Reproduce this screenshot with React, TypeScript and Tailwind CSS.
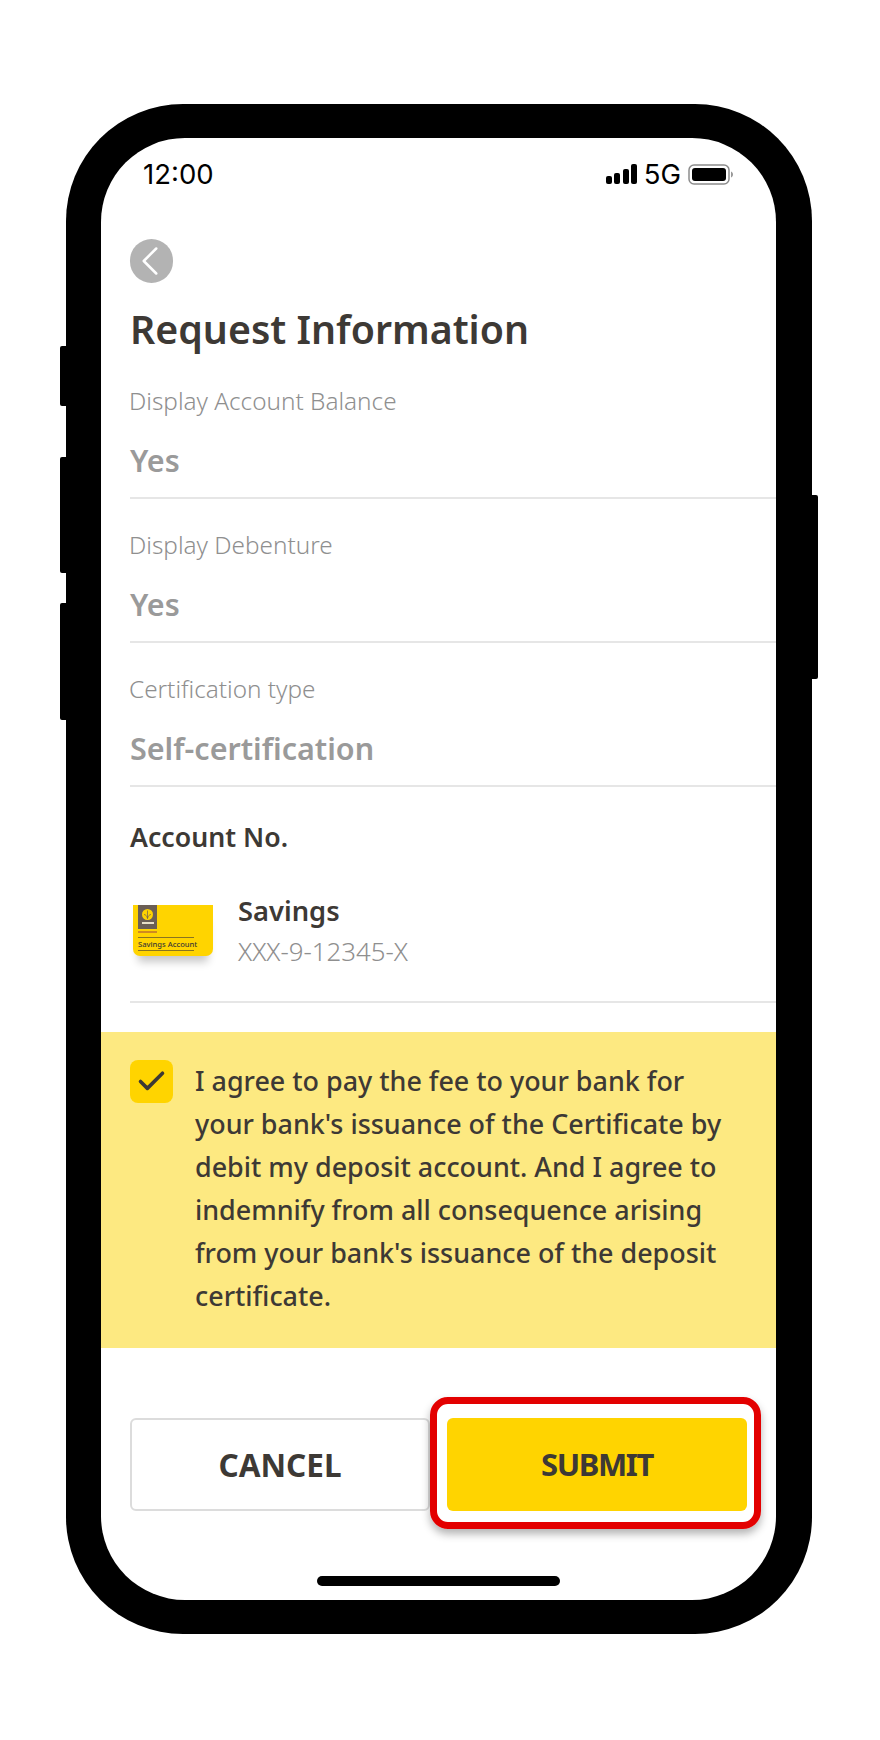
import { Check, ChevronLeft } from "lucide-react";

const fields = [
  { label: "Display Account Balance", value: "Yes" },
  { label: "Display Debenture", value: "Yes" },
  { label: "Certification type", value: "Self-certification" },
];

function SavingsCard() {
  return (
    <div className="relative w-[80px] h-[51px] shrink-0 rounded-b-[7px] bg-[#ffd400] shadow-[0_11px_9px_-5px_rgba(0,0,0,0.22)]">
      <div className="absolute left-[5px] top-0 w-[19px] h-[24px] bg-[#6b5f55] flex flex-col items-center pt-[4px]">
        <svg width="11" height="11" viewBox="0 0 11 11" fill="#ffd400">
          <circle cx="5.500" cy="5.500" r="5.500" />
          <path d="M5.500 1.500v8M2 5.500c1.500 0 3 1.500 3.500 4M9 5.500c-1.500 0-3 1.500-3.500 4" fill="none" stroke="#6b5f55" strokeWidth="0.7" />
        </svg>
        <div className="mt-[2px] w-[12px] h-[2px] bg-[#e8e0c8]" />
      </div>
      <div className="absolute left-[5px] top-[26px] w-[19px] h-[2px] bg-[#d08a20]" />
      <div className="absolute left-[5px] w-[56px] top-[32px] h-[14px] border-y border-[#8a7420] text-[7.600px] leading-[12px] font-medium text-[#3d3935] whitespace-nowrap">
        Savings Account
      </div>
    </div>
  );
}

export default function App() {
  return (
    <div className="w-[880px] h-[1740px] bg-white pl-[66px] pt-[104px] font-['Noto_Sans',sans-serif] text-[#3d3935]">
      <div className="relative w-[746px] h-[1530px] bg-black rounded-[117px] pt-[34px] pr-[36px] pb-[34px] pl-[35px]">
        {/* hardware buttons */}
        <div className="absolute left-[-6px] top-[242px] w-[6px] h-[60px] bg-black rounded-l-[2px]" />
        <div className="absolute left-[-6px] top-[353px] w-[6px] h-[116px] bg-black rounded-l-[2px]" />
        <div className="absolute left-[-6px] top-[499px] w-[6px] h-[117px] bg-black rounded-l-[2px]" />
        <div className="absolute right-[-6px] top-[391px] w-[6px] h-[184px] bg-black rounded-r-[2px]" />

        <div className="relative h-full bg-white rounded-[84px] flex flex-col overflow-hidden">
          {/* status bar */}
          <div className="h-[68px] shrink-0 flex items-end justify-between pl-[42px] pr-[43px] pb-[17px] text-black font-['Inter',sans-serif]">
            <span className="text-[27.500px] leading-[30px]">12:00</span>
            <div className="flex items-center gap-[7px]">
              <svg width="31" height="20" viewBox="0 0 31 20" fill="black">
                <rect x="0" y="12" width="6" height="8" rx="2" />
                <rect x="8" y="9" width="6" height="11" rx="2" />
                <rect x="17" y="5" width="6" height="15" rx="2" />
                <rect x="25" y="0" width="6" height="20" rx="2" />
              </svg>
              <span className="text-[27.500px] leading-[30px]">5G</span>
              <svg width="45" height="21" viewBox="0 0 45 21">
                <rect x="1" y="1" width="40" height="19" rx="5" fill="none" stroke="#8c8c8c" strokeWidth="1.5" />
                <rect x="4" y="4" width="34" height="13" rx="3" fill="black" />
                <path d="M43 7.500c1.300 .5 2 1.700 2 3s-.7 2.500-2 3z" fill="#999" />
              </svg>
            </div>
          </div>

          <div className="pl-[29px] pt-[33px] shrink-0">
            <div className="w-[43px] h-[44px] rounded-full bg-[#b3b3b3] flex items-center justify-center text-white">
              <ChevronLeft size={50} strokeWidth={1.2} className="shrink-0 mr-[4px]" />
            </div>
            <h1 className="mt-[21px] text-[39.300px] leading-[50px] font-semibold whitespace-nowrap">Request Information</h1>
          </div>

          <div className="pl-[29px] mt-[1px] shrink-0">
            {fields.map((f) => (
              <div key={f.label} className="h-[144px] pt-[31px] border-b-2 border-[#e6e6e6]">
                <p className="text-[24.300px] leading-[30px] font-light text-[#8f8f8f] -ml-px">{f.label}</p>
                <p className="mt-[24px] text-[30.500px] leading-[40px] font-semibold text-[#9a9a9a]">{f.value}</p>
              </div>
            ))}
            <p className="mt-[33px] text-[26.700px] leading-[34px] font-semibold">Account No.</p>
            <div className="h-[149px] border-b-2 border-[#e6e6e6] flex items-start pt-[39px] pl-[3px]">
              <div className="mt-[12px]">
                <SavingsCard />
              </div>
              <div className="ml-[25px]">
                <p className="text-[27.300px] leading-[36px] font-semibold">Savings</p>
                <p className="mt-[7px] text-[25.800px] leading-[30px] font-light text-[#8f8f8f]">XXX-9-12345-X</p>
              </div>
            </div>
          </div>

          <div className="mt-[29px] h-[316px] shrink-0 bg-[#fde981] pl-[29px] pr-[40px] pt-[28px] flex gap-[22px]">
            <div className="w-[43px] h-[43px] shrink-0 rounded-[8px] bg-[#ffd400] flex items-center justify-center">
              <Check size={33} strokeWidth={2.600} />
            </div>
            <p className="-mt-px text-[26.900px] leading-[43.100px] font-medium">
              I agree to pay the fee to your bank for your bank's issuance of the Certificate by debit my deposit account. And I agree to indemnify from all consequence arising from your bank's issuance of the deposit certificate.
            </p>
          </div>

          <div className="flex pl-[29px] mt-[70px] shrink-0">
            <div className="w-[300px] h-[93px] rounded-[6px] border-2 border-[#dcdcdc] flex items-center justify-center text-[31.500px] font-bold">CANCEL</div>
            <div className="relative ml-[17px] w-[300px] h-[93px] rounded-[6px] bg-[#ffd400] flex items-center justify-center text-[31px] font-bold tracking-[-1.400px]">
              SUBMIT
              <div className="absolute -left-[17px] -right-[14px] -top-[21px] -bottom-[18px] rounded-[18px] border-[7px] border-[#e30000] shadow-[0_5px_8px_rgba(0,0,0,0.3)]" />
            </div>
          </div>

          <div className="absolute left-[216px] bottom-[14px] w-[243px] h-[10px] rounded-full bg-black" />
        </div>
      </div>
    </div>
  );
}
